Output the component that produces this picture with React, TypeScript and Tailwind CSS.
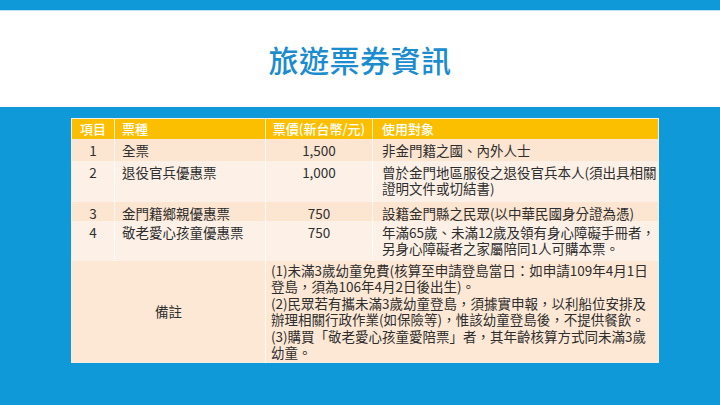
import React from "react";

type Row = {
  no: string;
  name: string;
  price: string;
  target: React.ReactNode;
  h: string;
  bg: string;
};

const rows: Row[] = [
  {
    no: "1",
    name: "全票",
    price: "1,500",
    target: "非金門籍之國、內外人士",
    h: "h-[22px]",
    bg: "bg-[#fce5d1]",
  },
  {
    no: "2",
    name: "退役官兵優惠票",
    price: "1,000",
    target: (
      <>
        曾於金門地區服役之退役官兵本人(須出具相關
        <br />
        證明文件或切結書)
      </>
    ),
    h: "h-[41px]",
    bg: "bg-[#fdf1e7]",
  },
  {
    no: "3",
    name: "金門籍鄉親優惠票",
    price: "750",
    target: "設籍金門縣之民眾(以中華民國身分證為憑)",
    h: "h-[19px]",
    bg: "bg-[#fce5d1]",
  },
  {
    no: "4",
    name: "敬老愛心孩童優惠票",
    price: "750",
    target: (
      <>
        年滿65歲、未滿12歲及領有身心障礙手冊者，
        <br />
        另身心障礙者之家屬陪同1人可購本票。
      </>
    ),
    h: "h-[40px]",
    bg: "bg-[#fdf1e7]",
  },
];

export default function App() {
  return (
    <div
      className="w-[720px] h-[405px] bg-[#0f99d9] flex flex-col overflow-hidden"
      style={{ fontFamily: '"Noto Sans CJK TC", "Noto Sans", sans-serif' }}
    >
      <div className="h-[10px] shrink-0" />
      <div className="h-[97px] shrink-0 bg-white border-t border-[#bfe3f5] flex items-center justify-center">
        <h1 className="text-[30px] leading-none font-medium text-[#1b8cce] tracking-[0.5px]">
          旅遊票券資訊
        </h1>
      </div>

      <div className="pt-[11px] pl-[71px]">
        <table className="w-[588px] table-fixed border-collapse border border-[#f4efe4] text-[13.5px] text-[#2e2e2e]">
          <colgroup>
            <col className="w-[43px]" />
            <col className="w-[151px]" />
            <col className="w-[107px]" />
            <col />
          </colgroup>
          <thead>
            <tr className="h-[20px] bg-[#fcbf00] text-white text-[13px] leading-[16px]">
              <th className="font-medium text-center border-r border-white/80">項目</th>
              <th className="font-medium text-left pl-[7px] border-r border-white/80">票種</th>
              <th className="font-medium text-center whitespace-nowrap border-r border-white/80">
                票價(新台幣/元)
              </th>
              <th className="font-medium text-left pl-[9px]">使用對象</th>
            </tr>
          </thead>
          <tbody>
            {rows.map((r) => (
              <tr key={r.no} className={`${r.h} ${r.bg} leading-[16px]`}>
                <td className="text-center align-top pt-[3px] border-r border-white/70">{r.no}</td>
                <td className="align-top pt-[3px] pl-[7px] whitespace-nowrap border-r border-white/70">
                  {r.name}
                </td>
                <td className="text-center align-top pt-[3px] border-r border-white/70">{r.price}</td>
                <td className="align-top pt-[3px] pl-[9px] whitespace-nowrap">{r.target}</td>
              </tr>
            ))}
            <tr className="h-[102px] bg-[#fde8d5]">
              <td colSpan={2} className="text-center border-r border-white/70">
                備註
              </td>
              <td colSpan={2} className="pl-[5px] leading-[16.4px] whitespace-nowrap">
                (1)未滿3歲幼童免費(核算至申請登島當日：如申請109年4月1日
                <br />
                登島，須為106年4月2日後出生)。
                <br />
                (2)民眾若有攜未滿3歲幼童登島，須據實申報，以利船位安排及
                <br />
                辦理相關行政作業(如保險等)，惟該幼童登島後，不提供餐飲。
                <br />
                (3)購買「敬老愛心孩童愛陪票」者，其年齡核算方式同未滿3歲
                <br />
                幼童。
              </td>
            </tr>
          </tbody>
        </table>
      </div>
    </div>
  );
}
